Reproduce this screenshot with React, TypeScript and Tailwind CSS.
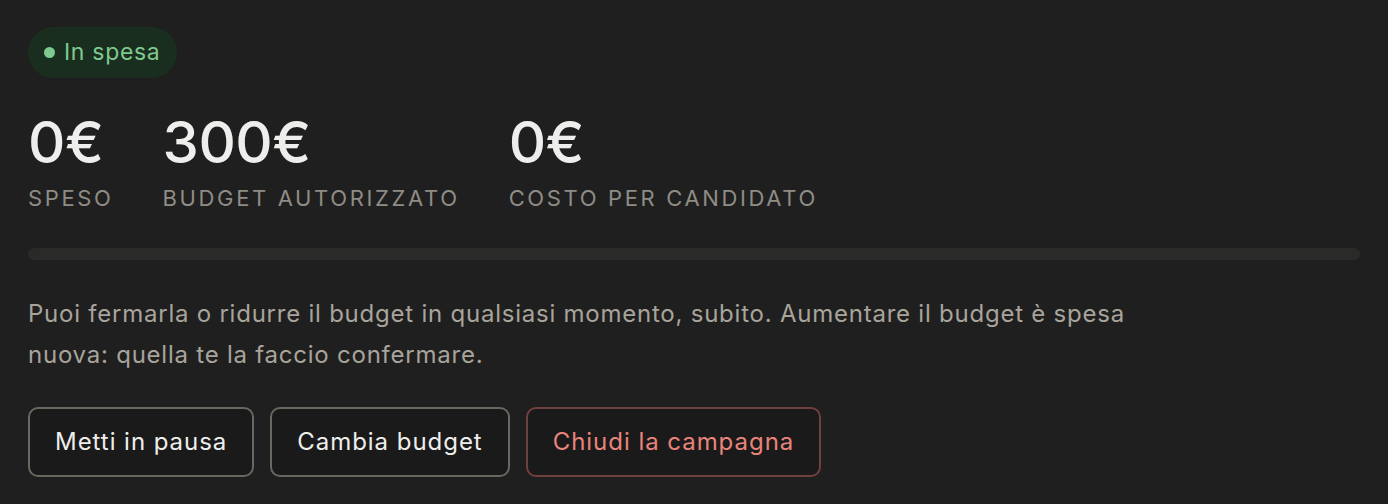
import React from "react";

export default function App() {
  return (
    <div
      className="w-[1388px] h-[504px] bg-[#1f1f1f] px-[28px] pt-[27px]"
      style={{ fontFamily: "Inter, 'Noto Sans', sans-serif" }}
    >
      <div className="inline-flex items-center gap-[9px] h-[51px] rounded-full bg-[#1a2e1f] pl-[16px] pr-[17px] text-[23px] tracking-[0.03em] text-[#7fc98f]">
        <span className="w-[11px] h-[11px] rounded-full bg-[#7fc98f]" />
        <span>In spesa</span>
      </div>

      <div className="flex gap-[49px] mt-[32px]">
        {[
          ["0€", "SPESO"],
          ["300€", "BUDGET AUTORIZZATO"],
          ["0€", "COSTO PER CANDIDATO"],
        ].map(([v, l]) => (
          <div key={l} className="flex flex-col">
            <div className="text-[58px] leading-[64px] font-medium text-[#eeeeec] tracking-[-0.5px]">{v}</div>
            <div className="mt-[12px] text-[22px] leading-[24px] tracking-[0.12em] text-[#8f8c86]">{l}</div>
          </div>
        ))}
      </div>

      <div className="mt-[38px] h-[12px] rounded-full bg-[#2a2a28]" />

      <p className="mt-[33px] max-w-[1130px] text-[24px] leading-[41px] tracking-[0.032em] text-[#a8a49c]">
        Puoi fermarla o ridurre il budget in qualsiasi momento, subito. Aumentare il budget è spesa nuova: quella te la faccio confermare.
      </p>

      <div className="flex gap-[16px] mt-[32px]">
        <button className="h-[70px] px-[25px] rounded-[10px] border-2 border-[#6a6660] bg-[#1a1a1a] text-[24px] tracking-[0.04em] text-[#eeeeec]">
          Metti in pausa
        </button>
        <button className="h-[70px] px-[25px] rounded-[10px] border-2 border-[#6a6660] bg-[#1a1a1a] text-[24px] tracking-[0.04em] text-[#eeeeec]">
          Cambia budget
        </button>
        <button className="h-[70px] px-[25px] rounded-[10px] border-2 border-[#70403e] bg-[#1a1a1a] text-[24px] tracking-[0.04em] text-[#e8847a]">
          Chiudi la campagna
        </button>
      </div>
    </div>
  );
}
